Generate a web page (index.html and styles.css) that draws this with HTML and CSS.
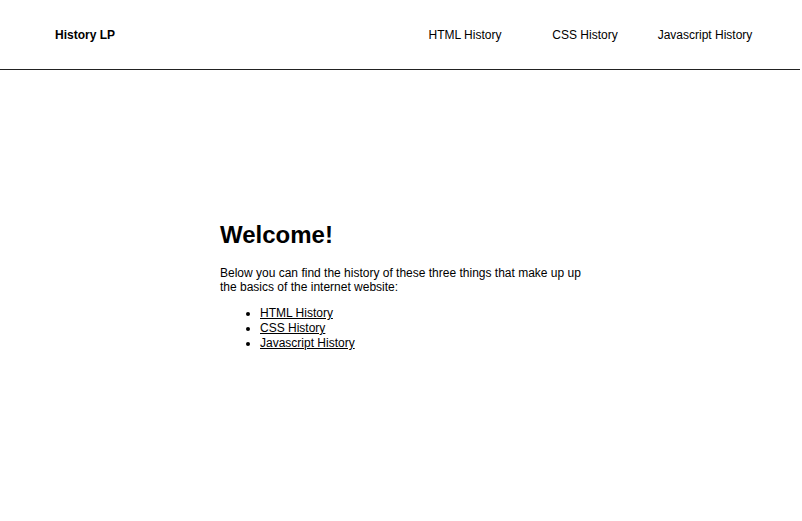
FILE: index.html
```html
<!DOCTYPE html>
<html lang="en">
<head>
<meta charset="utf-8">
<title>History LP</title>
<link rel="stylesheet" href="styles.css">
</head>
<body>
<header class="site-header">
  <div class="logo">History LP</div>
  <nav class="nav">
    <a class="nav-link" href="#">HTML History</a>
    <a class="nav-link" href="#">CSS History</a>
    <a class="nav-link" href="#">Javascript History</a>
  </nav>
</header>
<main class="main">
  <section class="content">
    <h1 class="title">Welcome!</h1>
    <p class="intro">Below you can find the history of these three things that make up up the basics of the internet website:</p>
    <ul class="links">
      <li><a href="#">HTML History</a></li>
      <li><a href="#">CSS History</a></li>
      <li><a href="#">Javascript History</a></li>
    </ul>
  </section>
</main>
</body>
</html>
```
FILE: styles.css
```css
html, body {
  margin: 0;
  padding: 0;
  background: #fff;
  color: #000;
  font-family: "Liberation Sans", Arial, Helvetica, sans-serif;
  font-size: 12px;
}

.site-header {
  box-sizing: border-box;
  width: 800px;
  height: 70px;
  padding: 1px 35px 0 55px;
  border-bottom: 1px solid #222;
  display: flex;
  align-items: center;
  justify-content: space-between;
}

.logo {
  font-weight: bold;
  font-size: 12px;
}

.nav {
  display: flex;
}

.nav-link {
  width: 120px;
  text-align: center;
  color: #000;
  text-decoration: none;
}

.main {
  padding: 151px 0 0 220px;
}

.content {
  max-width: 370px;
}

.title {
  font-size: 24px;
  font-weight: bold;
  margin: 0 0 17px;
}

.intro {
  margin: 0 0 12px;
}

.links {
  margin: 0;
  padding-left: 40px;
}

.links li {
  line-height: 15px;
}

.links a {
  color: #000;
  text-decoration: underline;
}
```
